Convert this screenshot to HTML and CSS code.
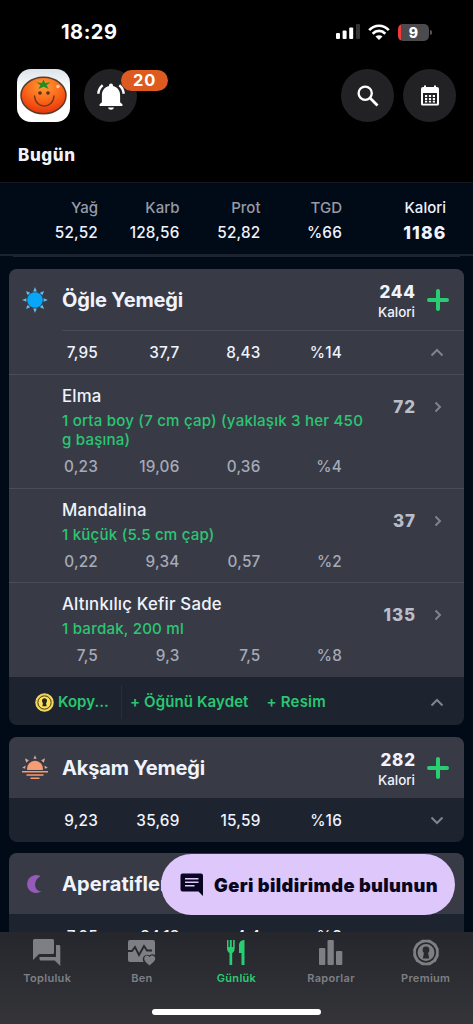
FILE: index.html
```html
<!DOCTYPE html>
<html lang="tr">
<head>
<meta charset="utf-8">
<title>Bugün</title>
<link rel="stylesheet" href="styles.css">
</head>
<body>
<div class="app">
  <header class="top">
    <div class="status">
      <span class="clock">18:29</span>
      <div class="status-icons">
        <svg width="24" height="16" viewBox="0 0 24 16" fill="#fff"><rect x="0" y="9" width="4" height="6" rx="1"/><rect x="6.6" y="6.6" width="4" height="8.4" rx="1"/><rect x="13.2" y="3.4" width="4" height="11.6" rx="1"/><rect x="20" y="0" width="4" height="15" rx="1" fill="#333"/></svg>
        <svg class="wifi" width="22" height="17" viewBox="0 0 22 17" fill="none" stroke="#fff" stroke-width="2.7"><path d="M1.2 6.1C6.7.3 15.3.3 20.8 6.1"/><path d="M4.7 9.7C8.3 6 13.7 6 17.3 9.7"/><path d="M11 16 7.5 12.5C9.5 10.7 12.5 10.7 14.5 12.5Z" fill="#fff" stroke="none"/></svg>
        <div class="battery"><span>9</span></div>
        <i class="battery-tip"></i>
      </div>
    </div>
    <div class="actions">
      <svg class="avatar" width="53" height="53" viewBox="0 0 53 53">
        <defs><radialGradient id="tomato" cx=".5" cy=".25" r=".75"><stop offset="0" stop-color="#ff9a35"/><stop offset=".5" stop-color="#fb6a1b"/><stop offset="1" stop-color="#e93209"/></radialGradient><linearGradient id="tile" x2="0" y2="1"><stop offset="0" stop-color="#dce3ec"/><stop offset=".4" stop-color="#fff"/></linearGradient></defs>
        <rect width="53" height="53" rx="14" fill="url(#tile)"/>
        <ellipse cx="26.5" cy="26.5" rx="22.5" ry="18.3" fill="url(#tomato)" stroke="#573d28" stroke-width="1.5"/>
        <path d="M26.5 10.5l1.6 3.5 5.5-.8-4 3 2 3.8-5-2.3-5.2 2.3 2-3.8-4.2-3 5.6.8z" fill="#278c20"/>
        <circle cx="23" cy="24" r="1.8" fill="#573018"/><circle cx="31" cy="24" r="1.8" fill="#573018"/><circle cx="41" cy="17.5" r="1.8" fill="#ffc7a0"/>
        <path d="M17.5 27c1 13.5 18.5 13.5 19.5 0" fill="none" stroke="#70371b" stroke-width="1.4" stroke-linecap="round"/>
      </svg>
      <div class="round bell">
        <svg width="28" height="28" viewBox="0 0 28 28"><path d="M14 1.6a2 2 0 0 1 2 2v.5c4.3 1 7.1 4.5 7.1 9v7.2l2.3 2v1.8H2.6v-1.8l2.3-2v-7.2c0-4.5 2.8-8 7.1-9v-.5a2 2 0 0 1 2-2zM11.1 25.5h5.8c-.4 3-5.4 3-5.8 0z" fill="#fff"/><path d="M1.4 11.7C1.5 8.4 3 5.3 5.7 3.2M26.6 11.7c-.1-3.3-1.6-6.4-4.3-8.5" fill="none" stroke="#fff" stroke-width="2.5"/></svg>
        <span class="badge">20</span>
      </div>
      <div class="round search"><svg width="22" height="22" viewBox="0 0 22 22" fill="none" stroke="#fff" stroke-width="2.3"><circle cx="8.2" cy="8.2" r="6.6"/><path d="M12.8 12.8 20.5 20.5" stroke-width="2.8"/></svg></div>
      <div class="round"><svg width="20" height="21" viewBox="0 0 20 21"><path d="M3 2h1V.5h2V2h8V.5h2V2h1a2 2 0 0 1 2 2v15a1.6 1.6 0 0 1-1.6 1.6H2.6A1.6 1.6 0 0 1 1 19V4a2 2 0 0 1 2-2z" fill="#fff"/><path d="M3 8h14v10.7H3z" fill="#222224"/><path d="M5 10h2.2v2H5zM8.9 10h2.2v2H8.9zM12.8 10H15v2h-2.2zM5 12.9h2.2v2H5zM8.9 12.9h2.2v2H8.9zM12.8 12.9H15v2h-2.2zM5 15.8h2.2v1.8H5zM8.9 15.8h2.2v1.8H8.9zM12.8 15.8H15v1.8h-2.2z" fill="#fff"/></svg></div>
    </div>
    <h1>Bugün</h1>
  </header>
  <section class="summary">
    <div><span>Yağ</span><b>52,52</b></div>
    <div><span>Karb</span><b>128,56</b></div>
    <div><span>Prot</span><b>52,82</b></div>
    <div><span>TGD</span><b>%66</b></div>
    <div class="summary-cal"><span>Kalori</span><b>1186</b></div>
  </section>
  <main class="diary">
    <div class="card-end"></div>
    <article class="card">
      <div class="meal">
        <svg class="meal-icon" width="26" height="26" viewBox="0 0 26 26"><g fill="#65bce6"><path id="ray" d="M11.2 4.4h3.6L13 .1z"/><use href="#ray" transform="rotate(45 13 13)"/><use href="#ray" transform="rotate(90 13 13)"/><use href="#ray" transform="rotate(135 13 13)"/><use href="#ray" transform="rotate(180 13 13)"/><use href="#ray" transform="rotate(225 13 13)"/><use href="#ray" transform="rotate(270 13 13)"/><use href="#ray" transform="rotate(315 13 13)"/></g><circle cx="13" cy="13" r="7.8" fill="#07a6f8"/></svg>
        <h2>Öğle Yemeği</h2>
        <div class="cal"><b>244</b><span>Kalori</span></div>
        <svg class="plus" viewBox="0 0 22 22"><path d="M11 2v18M2 11h18"/></svg>
      </div>
      <div class="nums totals ruled"><span>7,95</span><span>37,7</span><span>8,43</span><span>%14</span><svg class="chev" viewBox="0 0 14 9"><path d="M1.5 7.5 7 2l5.5 5.5"/></svg></div>
      <div class="food">
        <div class="info"><h3>Elma</h3><p>1 orta boy (7 cm çap) (yaklaşık 3 her 450<br>g başına)</p></div>
        <b class="kcal">72</b><svg class="go" viewBox="0 0 8 12"><path d="M1.5 1.5 6 6l-4.5 4.5"/></svg>
        <div class="nums"><span>0,23</span><span>19,06</span><span>0,36</span><span>%4</span></div>
      </div>
      <div class="food">
        <div class="info"><h3>Mandalina</h3><p>1 küçük (5.5 cm çap)</p></div>
        <b class="kcal">37</b><svg class="go" viewBox="0 0 8 12"><path d="M1.5 1.5 6 6l-4.5 4.5"/></svg>
        <div class="nums"><span>0,22</span><span>9,34</span><span>0,57</span><span>%2</span></div>
      </div>
      <div class="food">
        <div class="info"><h3>Altınkılıç Kefir Sade</h3><p>1 bardak, 200 ml</p></div>
        <b class="kcal">135</b><svg class="go" viewBox="0 0 8 12"><path d="M1.5 1.5 6 6l-4.5 4.5"/></svg>
        <div class="nums"><span>7,5</span><span>9,3</span><span>7,5</span><span>%8</span></div>
      </div>
      <div class="tools">
        <svg class="coin" width="19" height="19" viewBox="0 0 19 19"><circle cx="9.5" cy="9.5" r="8.6" fill="#e8c84a" stroke="#f4df71" stroke-width="1.3"/><circle cx="9.5" cy="9.5" r="6.6" fill="#ffdf55" stroke="#494326"/><circle cx="9.5" cy="7.8" r="2.5" fill="#252722"/><path d="M8.3 8h2.4l.9 5.2H7.4z" fill="#252722"/></svg>
        <span class="copy">Kopy...</span><span class="save">+ Öğünü Kaydet</span><span class="photo">+ Resim</span>
        <svg class="chev" viewBox="0 0 14 9"><path d="M1.5 7.5 7 2l5.5 5.5"/></svg>
      </div>
    </article>
    <article class="card">
      <div class="meal">
        <svg class="meal-icon" width="26" height="26" viewBox="0 0 26 26"><path d="M5.2 15a7.9 7.9 0 1 1 15.6 0z" fill="#f79b72"/><path d="M0 16.8h26M4.5 20h17M8.5 23.3h9" stroke="#f79b72" stroke-width="1.5"/><path d="M11.4 3.8h3.2L13 .2zM4.2 7.8l2.7-2.5-4-2zM19.1 5.3l2.7 2.5 1.3-4.5zM3.5 10.5.2 12.8l3 1zM22.5 10.5l3.3 2.3-3 1z" fill="#d8a69a"/></svg>
        <h2>Akşam Yemeği</h2>
        <div class="cal"><b>282</b><span>Kalori</span></div>
        <svg class="plus" viewBox="0 0 22 22"><path d="M11 2v18M2 11h18"/></svg>
      </div>
      <div class="nums totals"><span>9,23</span><span>35,69</span><span>15,59</span><span>%16</span><svg class="chev" viewBox="0 0 14 9"><path d="M1.5 1.5 7 7l5.5-5.5"/></svg></div>
    </article>
    <article class="card">
      <div class="meal">
        <svg class="meal-icon" width="26" height="26" viewBox="0 0 26 26"><path d="M18.5 5.2a9 9 0 1 0 1 15c-7 .4-9.5-10.5-1-15z" fill="#965bba"/></svg>
        <h2 class="snacks">Aperatifler</h2>
      </div>
      <div class="nums totals"><span>7,95</span><span>34,13</span><span>4,4</span><span>%8</span></div>
    </article>
  </main>
  <nav class="tabs">
    <div class="tab"><svg viewBox="0 0 28 28"><path d="M0 1.5Q0 0 1.5 0h18Q21 0 21 1.5v12Q21 15 19.5 15H6l-6 6zM23 6h3q1.3 0 1.3 1.5V27l-5.6-5.5H8q-1.5 0-1.5-1.5v-2H23z"/></svg><span>Topluluk</span></div>
    <div class="tab"><svg viewBox="0 0 28 28"><path d="M2 1h23q2 0 2 2v13c-2-1-4-1-5.5.6-3-2.6-8.5.8-6 6.4H2q-2 0-2-2V3q0-2 2-2z"/><path d="M0 12h4l3-4 4 8 5-9 3 4.5h5" fill="none" stroke="#28292e" stroke-width="1.9"/><path d="M21.5 26.5c-4-3.2-5.5-5-5.2-7.4.4-3 3.8-3.4 5.2-1 1.4-2.4 5.3-2 5.7 1 .3 2.4-1.7 4.2-5.7 7.4z"/></svg><span>Ben</span></div>
    <div class="tab active"><svg viewBox="0 0 28 28"><path d="M5 1h1.5v7h1.3V1h2v7h1.3V1h1.6v8c0 2.600-.8 4-2.500 5v12H7.500V14C5.800 13 5 11.600 5 9zM17 14V7c0-4 2-6 5.500-6v25h-3V14z"/></svg><span>Günlük</span></div>
    <div class="tab"><svg viewBox="0 0 28 28"><rect x="2" y="9" width="6.3" height="17" rx="1"/><rect x="10.5" y="1" width="6.3" height="25" rx="1"/><rect x="19" y="12" width="6.3" height="14" rx="1"/></svg><span>Raporlar</span></div>
    <div class="tab"><svg viewBox="0 0 28 28"><path d="M10 .8h8l6 4 2.7 5.2v7l-2.7 5.2-6 4h-8l-6-4L1.3 17v-7L4 4.800z"/><circle cx="14" cy="13.5" r="9.3" fill="none" stroke="#292a2e" stroke-width="1.7"/><circle cx="14" cy="11" r="3.4" fill="#292a2e"/><path d="M12.5 11h3l1.7 8.5h-6.400z" fill="#292a2e"/></svg><span>Premium</span></div>
    <i class="home"></i>
  </nav>
  <div class="feedback"><svg width="24" height="24" viewBox="0 0 24 24"><path d="M2.5.5h18.500q2 0 2 2v20.500l-4.500-4.500h-16q-2 0-2-2v-14q0-2 2-2z" fill="#090621"/><path d="M5 5.7h13.5M5 9.2h13.5M5 12.7h9.5" stroke="#dec8fb" stroke-width="1.5"/></svg><span>Geri bildirimde bulunun</span></div>
</div>
</body>
</html>
```
FILE: styles.css
```css
* { box-sizing: border-box; }
body { margin: 0; background: #000; }
h1, h2, h3, p { margin: 0; }
svg, i { display: block; flex: none; }
.app { position: relative; display: flex; flex-direction: column; width: 473px; height: 1024px; overflow: hidden; background: #010a17; color: #f0f3fc; font-family: Inter, "Liberation Sans", sans-serif; white-space: nowrap; }

.top { height: 183px; background: #000; border-bottom: 1px solid #15191f; }
.status { display: flex; justify-content: space-between; height: 69px; padding: 20px 41px 0 61px; }
.clock { font-size: 20px; line-height: 24px; font-weight: 700; letter-spacing: .5px; color: #fff; }
.status-icons { display: flex; height: 24px; align-items: center; }
.wifi { margin: 0 8px 0 8px; }
.battery { width: 31px; height: 17px; border-radius: 5px; background: linear-gradient(90deg, #f03b38 3px, #4b4b4d 3px); text-align: center; font-size: 14px; line-height: 17px; font-weight: 800; color: #fff; }
.battery-tip { width: 2px; height: 5px; margin-left: 1px; border-radius: 0 2px 2px 0; background: #555; }
.actions { display: flex; gap: 9px; padding: 0 17px; height: 76px; }
.avatar { margin-right: 5px; }
.round { position: relative; display: flex; align-items: center; justify-content: center; width: 53px; height: 53px; border-radius: 50%; background: #222224; }
.search { margin-left: auto; }
.badge { position: absolute; left: 37px; top: 1px; width: 47px; height: 21px; border-radius: 11px; background: #dd5a20; text-align: center; font-size: 16.5px; line-height: 21px; font-weight: 750; letter-spacing: .8px; color: #fff; }
.top h1 { padding-left: 18px; font-size: 17px; line-height: 21px; font-weight: 850; letter-spacing: .6px; }

.summary { display: grid; grid-template-columns: 98px 81.5px 81px 81.5px 104px; height: 73px; padding-top: 15px; border-bottom: 2px solid #1b2330; text-align: right; font-size: 15px; line-height: 20px; }
.summary div { display: flex; flex-direction: column; gap: 5px; }
.summary span { color: #969ba6; font-weight: 500; font-size: 15px; }
.summary b { font-weight: 550; font-size: 15.3px; letter-spacing: .2px; }
.summary .summary-cal span { color: #edf1fb; font-weight: 550; }
.summary .summary-cal b { font-size: 17.5px; font-weight: 850; letter-spacing: 1.2px; margin-right: -.6px; }

.diary { display: flex; flex-direction: column; gap: 11.6px; flex: 1; min-height: 0; padding: 0 9px; overflow: hidden; }
.card-end { flex: none; height: 1.4px; margin: 0 4px; background: #1d2532; }
.card { flex: none; border-radius: 8px; overflow: hidden; background: #1d2430; }
.meal { display: flex; align-items: center; height: 61px; padding: 1px 15px 0 13px; background: #383b46; }
.meal h2 { flex: 1; margin-left: 14px; font-size: 20px; line-height: 24px; font-weight: 700; letter-spacing: -.15px; }
.meal .snacks { letter-spacing: .1px; }
.cal { display: flex; flex-direction: column; align-items: flex-end; gap: 0; padding-top: 5px; }
.cal b { font-size: 17px; line-height: 21px; font-weight: 850; letter-spacing: .8px; margin-right: -.8px; }
.cal span { font-size: 13.4px; line-height: 19px; font-weight: 500; }
.plus { width: 22px; height: 22px; margin-left: 12px; fill: none; stroke: #2ace72; stroke-width: 4; stroke-linecap: round; }
.nums { display: grid; grid-template-columns: 89px 81.5px 81px 81.5px 102px; align-items: center; text-align: right; font-size: 15.3px; line-height: 20px; font-weight: 550; letter-spacing: .2px; }
.totals { height: 44px; padding-top: 2px; }
.ruled { background: linear-gradient(#484c57 0 0) 53px 0 / 402px 1px no-repeat, #383b46; }
.chev { width: 14px; height: 9px; margin-left: auto; fill: none; stroke: #7e8390; stroke-width: 2; }
.food { display: grid; grid-template-columns: 353px 54px auto; border-top: 1px solid #4a4d58; padding: 10px 0 10.7px; background: #383b46; }
.food .nums { grid-column: 1 / -1; margin-top: 8px; color: #a6aab7; font-weight: 480; }
.info { padding: 0 0 0 53px; }
.info h3 { font-size: 16.8px; line-height: 22px; font-weight: 550; letter-spacing: .2px; }
.info p { margin-top: 4px; font-size: 15.1px; line-height: 19px; font-weight: 550; letter-spacing: .2px; color: #2bc673; }
.kcal { margin-top: 11px; text-align: right; font-size: 17px; line-height: 22px; font-weight: 800; letter-spacing: .9px; color: #babeca; }
.go { width: 8px; height: 12px; margin: 16px 0 0 18px; fill: none; stroke: #7e8390; stroke-width: 2; }
.tools { display: flex; align-items: center; height: 48px; padding: 2px 20px 0 26px; color: #2bc673; font-size: 15px; line-height: 20px; font-weight: 570; }
.copy { width: 63px; margin-left: 4px; }
.save { padding-left: 8px; line-height: 34px; border-left: 1px solid #282f3b; letter-spacing: .1px; }
.photo { margin-left: 18px; letter-spacing: .2px; }

.tabs { position: relative; display: grid; grid-template-columns: repeat(5, 94.6px); height: 92px; padding-top: 7px; background: linear-gradient(#25272c, #343439); }
.tab { display: flex; flex-direction: column; align-items: center; gap: 3px; color: #7e7f84; font-size: 11px; line-height: 16px; font-weight: 600; letter-spacing: .3px; }
.tab svg { width: 28px; height: 28px; fill: currentColor; }
.tab.active { color: #2ace72; }
.home { position: absolute; left: 152px; bottom: 9px; width: 169px; height: 6px; border-radius: 3px; background: #fff; }
.feedback { position: absolute; left: 161px; top: 854px; display: flex; align-items: center; gap: 10px; width: 294px; height: 61px; padding-left: 19px; border-radius: 31px; background: #dec8fb; color: #090621; font-size: 18.3px; line-height: 24px; font-weight: 900; letter-spacing: .38px; }
```
